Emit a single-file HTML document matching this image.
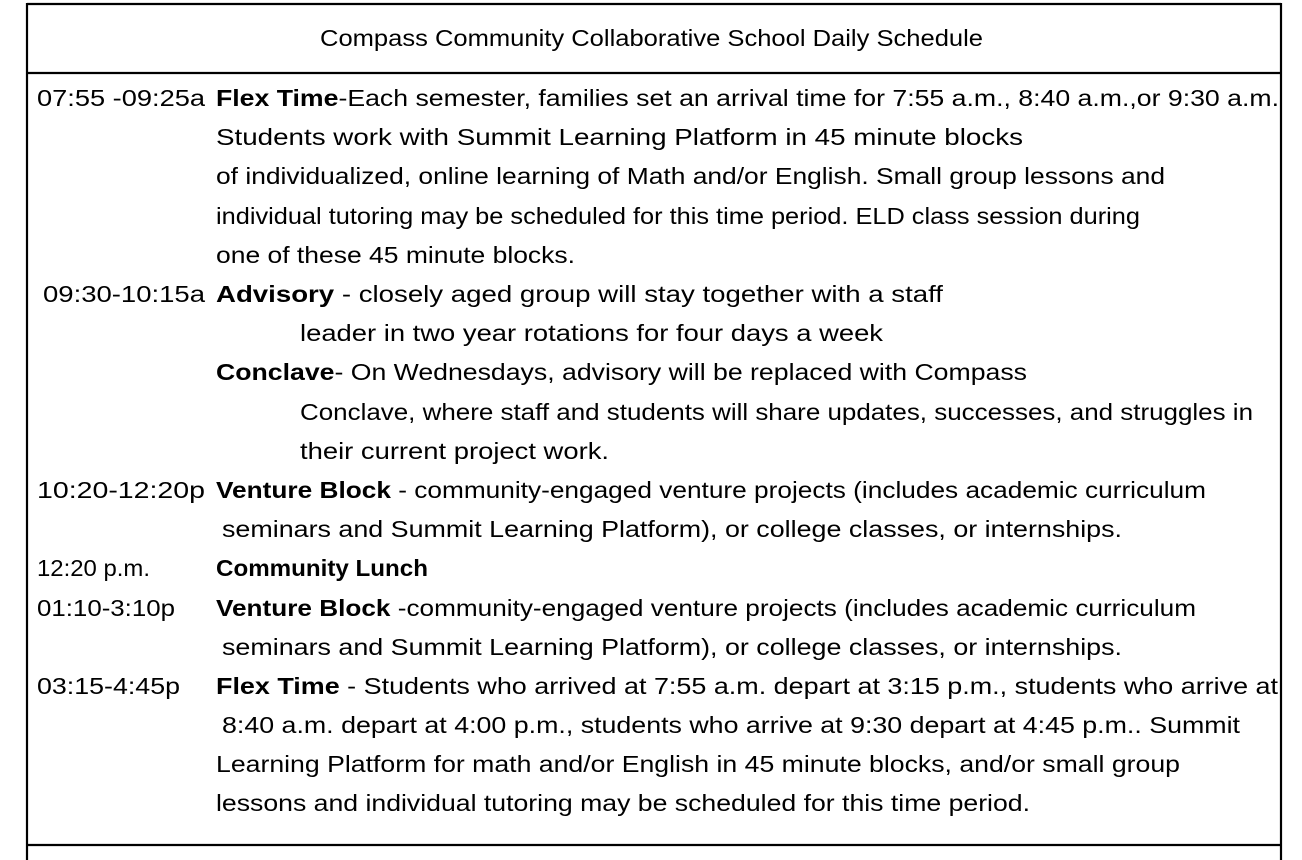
<!DOCTYPE html>
<html><head><meta charset="utf-8"><style>
html,body{margin:0;padding:0;background:#fff;width:1302px;height:860px;overflow:hidden}
svg{display:block}
text{font-family:"Liberation Sans",sans-serif;font-size:23px;fill:#000}
.b{font-weight:bold}
</style></head><body>
<svg width="1302" height="860" xmlns="http://www.w3.org/2000/svg">
<line x1="27" y1="4" x2="1281" y2="4" stroke="#000" stroke-width="2.2"/>
<line x1="27" y1="3" x2="27" y2="860" stroke="#000" stroke-width="2.2"/>
<line x1="1281" y1="3" x2="1281" y2="860" stroke="#000" stroke-width="2.2"/>
<line x1="27" y1="73" x2="1281" y2="73" stroke="#000" stroke-width="2.2"/>
<line x1="27" y1="845" x2="1281" y2="845" stroke="#000" stroke-width="2.2"/>
<text x="320" y="46" textLength="663" lengthAdjust="spacingAndGlyphs">Compass Community Collaborative School Daily Schedule</text>

<text x="37" y="106" textLength="168" lengthAdjust="spacingAndGlyphs">07:55 -09:25a</text>
<text x="216" y="106" textLength="1063" lengthAdjust="spacingAndGlyphs"><tspan class="b">Flex Time</tspan>-Each semester, families set an arrival time for 7:55 a.m., 8:40 a.m.,or 9:30 a.m.</text>
<text x="216" y="145" textLength="807" lengthAdjust="spacingAndGlyphs">Students work with Summit Learning Platform in 45 minute blocks</text>
<text x="216" y="184" textLength="949" lengthAdjust="spacingAndGlyphs">of individualized, online learning of Math and/or English. Small group lessons and</text>
<text x="216" y="224" textLength="924" lengthAdjust="spacingAndGlyphs">individual tutoring may be scheduled for this time period. ELD class session during</text>
<text x="216" y="263" textLength="359" lengthAdjust="spacingAndGlyphs">one of these 45 minute blocks.</text>

<text x="43" y="302" textLength="162" lengthAdjust="spacingAndGlyphs">09:30-10:15a</text>
<text x="216" y="302" textLength="727" lengthAdjust="spacingAndGlyphs"><tspan class="b">Advisory</tspan> - closely aged group will stay together with a staff</text>
<text x="300" y="341" textLength="583" lengthAdjust="spacingAndGlyphs">leader in two year rotations for four days a week</text>
<text x="216" y="380" textLength="811" lengthAdjust="spacingAndGlyphs"><tspan class="b">Conclave</tspan>- On Wednesdays, advisory will be replaced with Compass</text>
<text x="300" y="420" textLength="953" lengthAdjust="spacingAndGlyphs">Conclave, where staff and students will share updates, successes, and struggles in</text>
<text x="300" y="459" textLength="309" lengthAdjust="spacingAndGlyphs">their current project work.</text>

<text x="37" y="498" textLength="168" lengthAdjust="spacingAndGlyphs">10:20-12:20p</text>
<text x="216" y="498" textLength="990" lengthAdjust="spacingAndGlyphs"><tspan class="b">Venture Block</tspan> - community-engaged venture projects (includes academic curriculum</text>
<text x="222" y="537" textLength="900" lengthAdjust="spacingAndGlyphs">seminars and Summit Learning Platform), or college classes, or internships.</text>

<text x="37" y="576" textLength="113" lengthAdjust="spacingAndGlyphs">12:20 p.m.</text>
<text x="216" y="576" textLength="212" lengthAdjust="spacingAndGlyphs" class="b">Community Lunch</text>

<text x="37" y="616" textLength="138" lengthAdjust="spacingAndGlyphs">01:10-3:10p</text>
<text x="216" y="616" textLength="980" lengthAdjust="spacingAndGlyphs"><tspan class="b">Venture Block</tspan> -community-engaged venture projects (includes academic curriculum</text>
<text x="222" y="655" textLength="900" lengthAdjust="spacingAndGlyphs">seminars and Summit Learning Platform), or college classes, or internships.</text>

<text x="37" y="694" textLength="143" lengthAdjust="spacingAndGlyphs">03:15-4:45p</text>
<text x="216" y="694" textLength="1062" lengthAdjust="spacingAndGlyphs"><tspan class="b">Flex Time</tspan> - Students who arrived at 7:55 a.m. depart at 3:15 p.m., students who arrive at</text>
<text x="222" y="733" textLength="1018" lengthAdjust="spacingAndGlyphs">8:40 a.m. depart at  4:00 p.m., students who arrive at 9:30 depart at 4:45 p.m.. Summit</text>
<text x="216" y="772" textLength="964" lengthAdjust="spacingAndGlyphs">Learning Platform for math and/or English in 45 minute blocks, and/or small group</text>
<text x="216" y="811" textLength="814" lengthAdjust="spacingAndGlyphs">lessons and individual tutoring may be scheduled for this time period.</text>
</svg>
</body></html>
